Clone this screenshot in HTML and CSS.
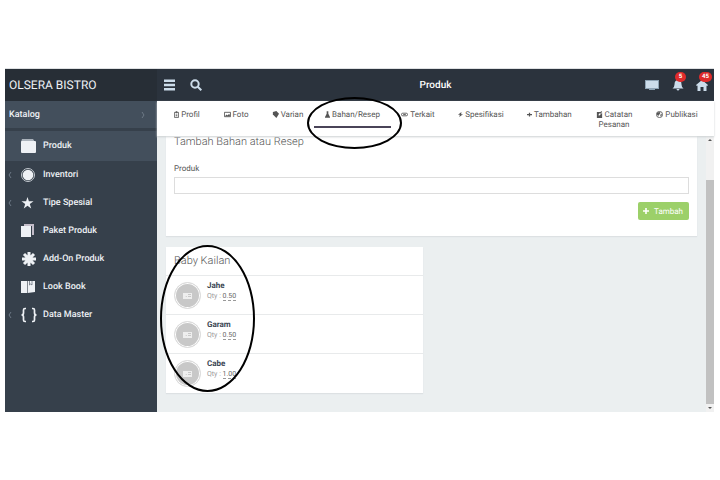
FILE: index.html
```html
<!DOCTYPE html>
<html lang="id">
<head>
  <meta charset="UTF-8">
  <meta name="viewport" content="width=device-width, initial-scale=1.0">
  <title>Olsera Bistro - Produk</title>
  <link rel="stylesheet" href="styles.css">
</head>
<body>
  <div class="app">
    <aside class="sidebar">
      <div class="brand">OLSERA BISTRO</div>
      <a class="section" href="#">Katalog
        <svg class="chevron" viewBox="0 0 4 8"><path d="M1 1l2 3-2 3"/></svg>
      </a>
      <nav class="menu">
        <a class="menu-item active" href="#">
          <span class="caret"></span>
          <svg class="menu-icon" viewBox="0 0 16 16"><path fill="#aab2bb" d="M2 1h11l2 3H1z"/><rect x="1" y="3" width="15" height="12" rx="1"/></svg>
          Produk
        </a>
        <a class="menu-item" href="#">
          <svg class="caret" viewBox="0 0 4 8"><path d="M3 1L1 4l2 3"/></svg>
          <svg class="menu-icon" viewBox="0 0 16 16"><circle cx="8" cy="8" r="6.500" fill="none" stroke="#c5cbd1"/><circle cx="8" cy="8" r="5.300"/></svg>
          Inventori
        </a>
        <a class="menu-item" href="#">
          <svg class="caret" viewBox="0 0 4 8"><path d="M3 1L1 4l2 3"/></svg>
          <svg class="menu-icon" viewBox="0 0 16 16"><path d="M7.500 2l1.400 4.300h4.600l-3.700 2.700 1.400 4.500-3.700-2.700-3.700 2.700 1.400-4.500L1.500 6.300h4.600z"/></svg>
          Tipe Spesial
        </a>
        <a class="menu-item" href="#">
          <span class="caret"></span>
          <svg class="menu-icon" viewBox="0 0 16 16"><path fill="#c3bdc9" d="M4 1h10v11h-2V3H4z"/><rect x="1" y="3" width="10" height="11"/></svg>
          Paket Produk
        </a>
        <a class="menu-item" href="#">
          <span class="caret"></span>
          <svg class="menu-icon" viewBox="0 0 16 16"><g stroke="#eef1f5" stroke-width="3"><path d="M9 1v14M2 8h14M4 3l10 10M14 3L4 13"/></g></svg>
          Add-On Produk
        </a>
        <a class="menu-item" href="#">
          <span class="caret"></span>
          <svg class="menu-icon" viewBox="0 0 16 16"><path d="M1 2h6v12H1zM7.600 2H15v11l-7.400 1z"/><path fill="none" stroke="#5a6370" stroke-width=".7" d="M9.500 2v4l1.200-1L12 6V2"/></svg>
          Look Book
        </a>
        <a class="menu-item" href="#">
          <svg class="caret" viewBox="0 0 4 8"><path d="M3 1L1 4l2 3"/></svg>
          <svg class="menu-icon wide" viewBox="0 0 18 16"><g fill="none" stroke="#eef1f5" stroke-width="1.700"><path d="M6 1.500H5Q3.500 1.500 3.500 3v3Q3.500 8 1.500 8q2 0 2 2v3q0 1.500 1.500 1.500h1M12 1.500h1q1.500 0 1.500 1.500v3q0 2 2 2-2 0-2 2v3q0 1.500-1.500 1.500h-1"/></g></svg>
          Data Master
        </a>
      </nav>
    </aside>

    <div class="main">
      <header class="topbar">
        <div class="tools">
          <button class="tool" aria-label="Menu"><svg viewBox="0 0 12 12"><path d="M1 .5h11V3H1zM1 4.750h11v2.500H1zM1 9h11v2.500H1z"/></svg></button>
          <button class="tool" aria-label="Cari"><svg viewBox="0 0 12 12"><g fill="none" stroke="#ccdcea" stroke-width="2"><circle cx="5" cy="5" r="3.700"/><path d="M7.500 7.500L11.300 11.300"/></g></svg></button>
        </div>
        <h1 class="title">Produk</h1>
        <div class="tools right">
          <button class="tool" aria-label="Layar"><svg class="screen" viewBox="0 0 16 12"><path fill="#8ea3b4" d="M1 1h14v9H1zM5 10h6v1H5z"/><path d="M2 2h12v7H2z"/></svg></button>
          <button class="tool" aria-label="Notifikasi"><svg viewBox="0 0 12 12"><path d="M6 1q3.500 0 3.500 4.500Q9.500 8 11.500 9.500H.5Q2.500 8 2.500 5.500 2.500 1 6 1zM4.500 10h3q-.3 1.500-1.500 1.500T4.500 10z"/></svg><span class="badge">5</span></button>
          <button class="tool" aria-label="Beranda"><svg viewBox="0 0 12 12"><path d="M6 1l6 5-.8 1L10.500 6.500V12h-3V8h-3v4h-3V6.500L.8 7 0 6z"/></svg><span class="badge">45</span></button>
        </div>
      </header>

      <nav class="tabs">
        <a class="tab" href="#"><svg class="small" viewBox="0 0 6 8"><path class="line" d="M.5 1.500h5v6h-5z"/><path d="M2 0h2v2H2zM2 3h2v1H2zM2 5h2v1H2z"/></svg> Profil</a>
        <a class="tab" href="#"><svg viewBox="0 0 8 8"><path class="line" d="M.5 1.500h7v5h-7z"/><path d="M1 6l2-2 1 1 2-2 1 3z"/></svg> Foto</a>
        <a class="tab" href="#"><svg viewBox="0 0 8 8"><path d="M1 1l4-1 3 3-3 5-4-4z"/></svg> Varian</a>
        <a class="tab current" href="#"><svg class="small" viewBox="1 0 6 8"><path d="M3 0h2v3l2 4H1l2-4zM1 7h6v1H1z"/></svg> Bahan/Resep</a>
        <a class="tab" href="#"><svg viewBox="0 0 8 8"><path class="line" d="M2 2.500h4q1.500 0 1.500 1.500T6 5.500H2Q.5 5.500.5 4T2 2.500zM2.500 4h3"/></svg> Terkait</a>
        <a class="tab" href="#"><svg class="small" viewBox="0 0 8 8"><path d="M5.500 0L0 4.500h3L2 8l6-4.500H5z"/></svg> Spesifikasi</a>
        <a class="tab" href="#"><svg class="small" viewBox="0 0 8 8"><path d="M3 1h2v2h3v2H5v2H3V5H0V3h3z"/></svg> Tambahan</a>
        <a class="tab" href="#"><svg viewBox="0 0 8 8"><path d="M1 1h4L3 4v1h1l3-3v6H1zM6 0l1 1-2 2-1-.5z"/></svg> Catatan Pesanan</a>
        <a class="tab" href="#"><svg viewBox="0 0 8 8"><circle class="line" cx="4" cy="4" r="3.500"/><path d="M1 2l3-1 1 1-1 2-1 .5V6L1 4zM5 4l2-.5L6 6H5z"/></svg> Publikasi</a>
      </nav>

      <div class="body">
        <div class="content">
          <form class="panel">
            <h2 class="heading">Tambah Bahan atau Resep</h2>
            <label class="label" for="produk">Produk</label>
            <input class="input" id="produk" type="text">
            <button class="add" type="button"><svg viewBox="0 0 8 8"><path d="M3.200 1h1.600v2.200H7v1.600H4.800V7H3.200V4.800H1V3.200h2.200z"/></svg>Tambah</button>
          </form>

          <section class="card">
            <h2 class="heading card-title">Baby Kailan</h2>
            <div class="ingredient">
              <span class="thumb"><svg viewBox="0 0 9 6"><path fill-rule="evenodd" d="M0 0h9v6H0zM2 4h2V3zM5 1v1h3V1zM5 3v1h3V3z"/></svg></span>
              <div><b class="name">Jahe</b><div class="qty">Qty : <a href="#">0.50</a></div></div>
            </div>
            <div class="ingredient">
              <span class="thumb"><svg viewBox="0 0 9 6"><path fill-rule="evenodd" d="M0 0h9v6H0zM2 4h2V3zM5 1v1h3V1zM5 3v1h3V3z"/></svg></span>
              <div><b class="name">Garam</b><div class="qty">Qty : <a href="#">0.50</a></div></div>
            </div>
            <div class="ingredient">
              <span class="thumb"><svg viewBox="0 0 9 6"><path fill-rule="evenodd" d="M0 0h9v6H0zM2 4h2V3zM5 1v1h3V1zM5 3v1h3V3z"/></svg></span>
              <div><b class="name">Cabe</b><div class="qty">Qty : <a href="#">1.00</a></div></div>
            </div>
          </section>
        </div>
        <div class="scrollbar">
          <svg viewBox="0 0 8 8"><path d="M2 5l2-2 2 2z"/></svg>
          <span class="thumb-bar"></span>
          <svg viewBox="0 0 8 8"><path d="M2 3l2 2 2-2z"/></svg>
        </div>
      </div>
    </div>
    <span class="mark mark-tab"></span>
    <span class="mark mark-list"></span>
  </div>
</body>
</html>
```

FILE: styles.css
```css
* {
  box-sizing: border-box;
}
body {
  margin: 0;
  padding: 69px 6px 0 5px;
  background: #fff;
  font-family: Roboto, "Liberation Sans", sans-serif;
  font-size: 8px;
  color: #555;
  text-rendering: geometricPrecision;
}
a {
  color: inherit;
  text-decoration: none;
}
button {
  border: 0;
  padding: 0;
  background: none;
  font-family: inherit;
  text-rendering: inherit;
  cursor: pointer;
}
h1, h2 {
  margin: 0;
}
svg {
  flex: none;
}
.app {
  position: relative;
  display: flex;
  box-shadow: 0 -1px 0 #dfe1e3;
}

/* sidebar */
.sidebar {
  width: 152px;
  flex: none;
  background: #36404b;
  color: #eef1f5;
}
.brand {
  height: 32px;
  padding-left: 4px;
  background: #272e36;
  font-size: 12px;
  line-height: 32px;
}
.section {
  display: flex;
  align-items: center;
  justify-content: space-between;
  height: 28px;
  padding: 0 12px 0 4px;
  background: #434f5c;
  border-bottom: 1px solid #36404b;
  font-size: 9px;
  font-weight: 500;
}
.chevron, .caret {
  width: 4px;
  height: 8px;
  fill: none;
  stroke: #6d7986;
}
.menu {
  padding-top: 2px;
}
.menu-item {
  display: flex;
  align-items: center;
  height: 28px;
  padding-left: 3px;
  font-size: 9px;
  font-weight: 500;
}
.menu-item.active {
  height: 30px;
  background: #434f5c;
}
.menu-icon {
  width: 16px;
  height: 16px;
  margin: 0 7px 0 8px;
  fill: #eef1f5;
}
.menu-icon.wide {
  width: 18px;
  margin-right: 5px;
}

/* header */
.main {
  flex: 1;
  min-width: 0;
}
.topbar {
  display: grid;
  grid-template-columns: 1fr auto 1fr;
  align-items: center;
  height: 32px;
  padding: 0 6px;
  background: #2b333d;
}
.title {
  color: #fff;
  font-size: 10px;
  font-weight: 500;
}
.tools {
  display: flex;
  gap: 15px;
}
.tools.right {
  justify-content: flex-end;
  gap: 12px;
}
.tool {
  position: relative;
  display: flex;
}
.tool svg {
  width: 12px;
  height: 12px;
  fill: #ccdcea;
}
.tool .screen {
  width: 16px;
}
.badge {
  position: absolute;
  top: -7px;
  left: 3px;
  min-width: 11px;
  height: 10px;
  padding: 0 3px;
  border-radius: 5px;
  background: #e02b2b;
  color: #fff;
  font-size: 6px;
  font-weight: 700;
  line-height: 10px;
}

/* tabs */
.tabs {
  position: relative;
  display: grid;
  grid-template-columns: 48fr 50fr 53fr 77fr 54fr 72fr 65fr 64fr 62fr;
  height: 35px;
  padding: 0 6px;
  background: #fff;
  box-shadow: 0 1px 2px #ccd0d2;
}
.tab {
  padding: 9px 8px 0;
  text-align: center;
  line-height: 10px;
}
.tab.current {
  height: 27px;
  border-bottom: 2px solid #4a4458;
}
.tab svg {
  width: 7px;
  height: 7px;
  vertical-align: -1px;
  fill: #555;
}
.tab .small {
  width: 5px;
}
.tab .line {
  fill: none;
  stroke: #555;
}

/* content */
.body {
  display: flex;
  background: #ebeff0;
}
.content {
  flex: 1;
  padding: 0 9px 19px;
}
.panel {
  display: flex;
  flex-direction: column;
  padding: 0 8px 16px;
  background: #fff;
  box-shadow: 0 1px 1px #dde1e3;
}
.heading {
  color: #555;
  font-size: 11px;
  font-weight: 300;
  line-height: 12px;
}
.label {
  margin-top: 16px;
  line-height: 10px;
}
.input {
  height: 17px;
  margin-top: 3px;
  padding: 0 4px;
  border: 1px solid #ddd;
  font-size: 8px;
}
.add {
  display: flex;
  align-items: center;
  align-self: flex-end;
  gap: 4px;
  height: 18px;
  margin-top: 8px;
  padding: 0 6px 0 4px;
  border-radius: 2px;
  background: #9cd069;
  color: #fff;
  font-size: 8px;
}
.add svg {
  width: 8px;
  height: 8px;
  fill: #fff;
}
.card {
  width: 257px;
  margin-top: 11px;
  padding-bottom: 1px;
  background: #fff;
  box-shadow: 0 1px 1px #dde1e3;
}
.card-title {
  padding-left: 8px;
  line-height: 28px;
}
.ingredient {
  display: flex;
  gap: 6px;
  height: 39px;
  padding: 6px 8px;
  border-top: 1px solid #e8eaeb;
}
.thumb {
  display: flex;
  align-items: center;
  justify-content: center;
  width: 27px;
  height: 27px;
  border: 1px solid #ddd;
  border-radius: 50%;
  background: #c8c8c8;
  box-shadow: inset 0 0 0 1px #fff;
}
.thumb svg {
  width: 9px;
  height: 6px;
  fill: #eee;
}
.name {
  display: block;
  color: #3b4653;
  line-height: 8px;
}
.qty {
  margin-top: 2px;
  color: #999;
  font-size: 7px;
  line-height: 9px;
}
.qty a {
  color: #666;
  border-bottom: 1px dashed #999;
}
.scrollbar {
  display: flex;
  flex-direction: column;
  width: 8px;
  background: #f1f1f1;
}
.scrollbar svg {
  width: 8px;
  height: 8px;
  fill: #555;
}
.thumb-bar {
  flex: 1;
  margin-top: 36px;
  background: #c1c1c1;
}

/* hand drawn circles over the page */
.mark {
  position: absolute;
  border: 2px solid #000;
  border-radius: 50%;
  pointer-events: none;
}
.mark-tab {
  top: 28px;
  left: 302px;
  width: 95px;
  height: 52px;
}
.mark-list {
  top: 176px;
  left: 155px;
  width: 95px;
  height: 147px;
}
```
